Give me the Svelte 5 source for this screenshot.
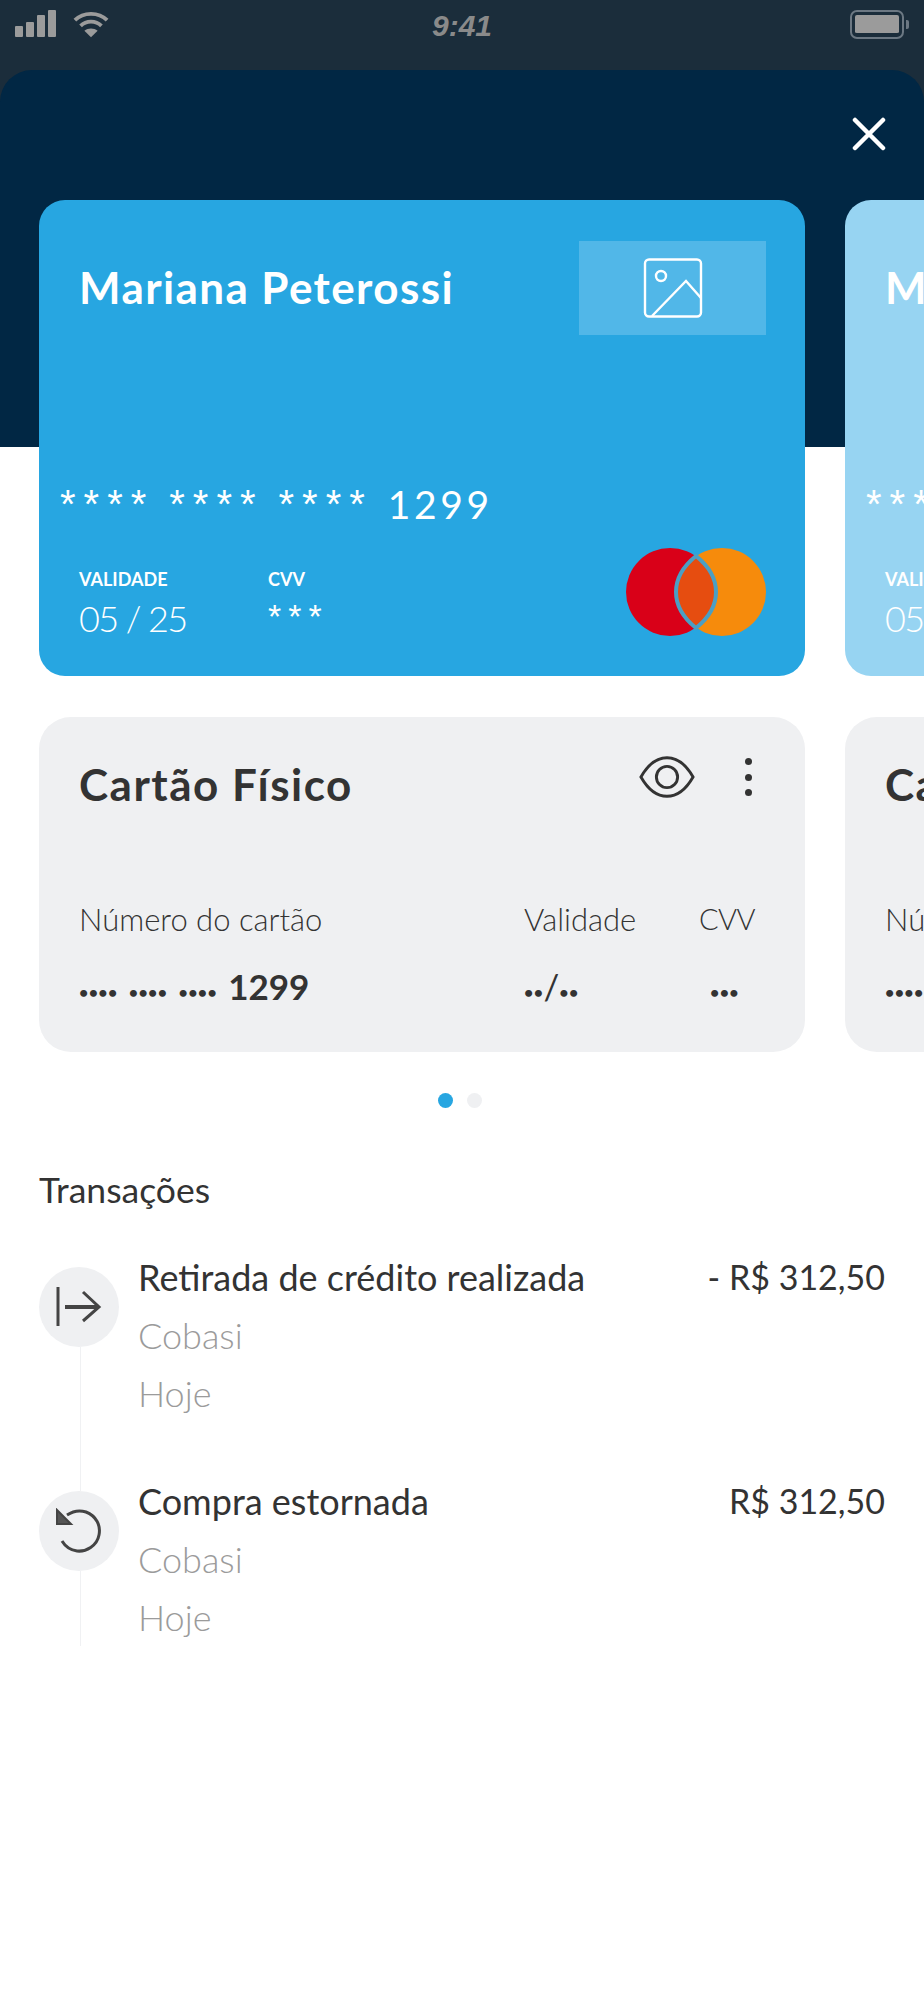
<script>
  const cards = [
    { soft: false, name: 'Mariana Peterossi' },
    { soft: true, name: 'Mariana Peterossi' }
  ];
  const tx = [
    { title: 'Retirada de crédito realizada', amount: '- R$ 312,50', icon: 'out' },
    { title: 'Compra estornada', amount: 'R$ 312,50', icon: 'undo' }
  ];
</script>

<div class="status">
  <div class="status-left">
    <div class="signal"><i class="b1"></i><i class="b2"></i><i class="b3"></i><i class="b4"></i></div>
    <svg class="wifi" width="36" height="28" viewBox="0 0 38 28" fill="none" stroke="#9b9b9b" stroke-width="4">
      <path d="M2 10 C11 1 27 1 36 10" />
      <path d="M8 16 C14 10 24 10 30 16" />
      <path d="M12 21 L19 28 L26 21 C22 18 16 18 12 21Z" fill="#9b9b9b" stroke="none" />
    </svg>
  </div>
  <span class="time">9:41</span>
  <div class="battery"><div class="cell"></div><div class="nub"></div></div>
</div>

<main class="sheet">
  <div class="close-row">
    <svg width="34" height="34" viewBox="0 0 34 34" stroke="#fff" stroke-width="4.5" stroke-linecap="round">
      <path d="M3 3 L31 31 M31 3 L3 31" />
    </svg>
  </div>

  <div class="carousel">
    {#each cards as c}
      <div class="slide">
        <section class="credit" class:soft={c.soft}>
          <div class="credit-top">
            <h2>{c.name}</h2>
            <div class="photo">
              <svg width="60" height="60" viewBox="0 0 60 60" fill="none" stroke="#fff" stroke-width="2.4">
                <rect x="2" y="1.5" width="56" height="57" rx="4" />
                <ellipse cx="18" cy="18" rx="5" ry="5" />
                <path d="M9 58 L43 23 L58 40" />
              </svg>
            </div>
          </div>
          <div class="pan"><span class="stars">****</span><span class="stars">****</span><span class="stars">****</span><span>1299</span></div>
          <div class="credit-bottom">
            <div class="field val">
              <b>VALIDADE</b>
              <span class="big">05 / 25</span>
            </div>
            <div class="field">
              <b>CVV</b>
              <span class="stars small">***</span>
            </div>
            <svg class="mc" width="142" height="90" viewBox="0 0 142 90">
              <circle cx="45" cy="45" r="44" fill="#d90018" />
              <circle cx="97" cy="45" r="44" fill="#f68b0c" />
              <path d="M71 9 C86 21 91 34 91 45 C91 56 86 69 71 81 C56 69 51 56 51 45 C51 34 56 21 71 9Z" fill="#e64d10" stroke="#4b9fc4" stroke-width="4" />
            </svg>
          </div>
        </section>

        <section class="info">
          <div class="info-top">
            <h3>Cartão Físico</h3>
            <div class="info-actions">
              <svg width="56" height="44" viewBox="0 0 58 44" fill="none" stroke="#333" stroke-width="3">
                <path d="M2 22 C10 8 19 2 29 2 C39 2 48 8 56 22 C48 36 39 42 29 42 C19 42 10 36 2 22Z" />
                <circle cx="29" cy="22" r="11" />
              </svg>
              <div class="kebab"><i></i><i></i><i></i></div>
            </div>
          </div>
          <div class="info-grid">
            <span class="lbl">Número do cartão</span>
            <span class="lbl">Validade</span>
            <span class="lbl cvv-lbl">CVV</span>
            <span class="v"><span class="masked">••••</span><span class="masked">••••</span><span class="masked">••••</span>1299</span>
            <span class="v"><span class="masked tight">••</span><span class="slash">/</span><span class="masked tight">••</span></span>
            <span class="v cvv"><span class="masked tight">•••</span></span>
          </div>
        </section>
      </div>
    {/each}
  </div>

  <div class="dots"><i class="on"></i><i></i></div>

  <section class="tx">
    <h4>Transações</h4>
    {#each tx as t}
      <div class="row">
        <div class="circle">
          {#if t.icon === 'out'}
            <svg width="46" height="42" viewBox="0 0 46 42" fill="none" stroke="#444" stroke-width="3">
              <path d="M2 1 V40" />
              <path d="M9 21 H43" stroke-width="4" />
              <path d="M27 6 L43 21 L27 35" />
            </svg>
          {:else}
            <svg width="46" height="46" viewBox="0 0 46 46" fill="none" stroke="#444" stroke-width="3">
              <path d="M11 7 C17 3 24 2 30 4 C40 8 45 17 43 27 C41 38 30 44 21 43 C14 42 9 38 6 33" />
              <path d="M1 2 L15 16 H1 Z" fill="#555" stroke-width="2" />
            </svg>
          {/if}
        </div>
        <div class="texts">
          <div class="head"><span class="title">{t.title}</span><span class="amount">{t.amount}</span></div>
          <div class="muted">Cobasi</div>
          <div class="muted">Hoje</div>
        </div>
      </div>
    {/each}
  </section>
</main>

<style>
  :global(body) {
    margin: 0;
    background: #1b2d3b;
    font-family: Lato, "Open Sans", sans-serif;
    width: 924px;
    height: 2000px;
    overflow: hidden;
  }
  h2, h3, h4 { margin: 0; }

  .status {
    height: 70px;
    padding: 10px 15px 0 15px;
    box-sizing: border-box;
    display: grid;
    grid-template-columns: 1fr auto 1fr;
    align-items: start;
    background: #1b2d3b;
  }
  .status-left { display: flex; gap: 17px; align-items: flex-start; }
  .signal { display: flex; gap: 3px; align-items: flex-end; height: 27px; }
  .signal i { display: block; width: 8px; background: #9b9b9b; border-radius: 1px; }
  .b1 { height: 11px; } .b2 { height: 15px; } .b3 { height: 22px; } .b4 { height: 27px; }
  .time {
    font: italic 700 30px/30px "Liberation Sans", sans-serif;
    color: #8a8a8a;
    margin-top: 1px;
  }
  .battery { justify-self: end; display: flex; align-items: center; gap: 2px; }
  .cell {
    width: 54px; height: 29px; box-sizing: border-box;
    border: 2px solid #6c7883; border-radius: 7px;
    background: #9b9b9b content-box;
    padding: 3px 3px 4px;
  }
  .nub { width: 3px; height: 9px; background: #6c7883; border-radius: 0 2px 2px 0; }

  .sheet { position: relative; height: 1930px; background: linear-gradient(#1b2d3b 32px, #fff 32px); }
  .sheet::before {
    content: "";
    position: absolute;
    inset: 0 0 auto 0;
    height: 377px;
    background: #012744;
    border-radius: 32px 32px 0 0;
  }

  .close-row {
    position: relative;
    display: flex;
    justify-content: flex-end;
    padding: 47px 38px 0 0;
    height: 83px;
  }

  .carousel { position: relative; display: flex; gap: 40px; padding-left: 39px; width: 1650px; }
  .slide { width: 766px; flex: none; display: flex; flex-direction: column; gap: 41px; }

  .credit {
    height: 476px;
    box-sizing: border-box;
    background: #27a6e1;
    border-radius: 26px;
    padding: 41px 39px 0 40px;
    color: #fff;
    display: flex;
    flex-direction: column;
  }
  .credit.soft { background: #97d4f2; }
  .credit-top { display: flex; justify-content: space-between; align-items: flex-start; }
  .credit-top h2 { font-size: 44px; letter-spacing: 1.4px; font-weight: 700; line-height: 94px; margin-top: -1px; }
  .photo {
    width: 187px; height: 94px;
    background: #51b7e8;
    display: flex; align-items: center; justify-content: center;
    box-sizing: border-box;
  }
  .credit.soft .photo { background: #b5e0f6; }
  .pan {
    margin: 147px 0 0 -19px;
    display: flex;
    gap: 15px;
    font-size: 39px;
    font-weight: 400;
    line-height: 44px;
    letter-spacing: 3.6px;
    height: 44px;
  }
  .stars { font-family: "Liberation Sans", sans-serif; font-size: 40px; letter-spacing: 8px; font-weight: 400; }
  .stars.small { font-size: 34px; letter-spacing: 7px; line-height: 40px; display: block; margin-top: 6px; }
  .credit-bottom { display: flex; align-items: flex-start; margin-top: 42px; }
  .field { display: flex; flex-direction: column; width: 189px; }
  .field b { font-size: 18px; line-height: 22px; font-weight: 700; }
  .field .big { font-size: 36px; letter-spacing: -1.6px; font-weight: 300; line-height: 46px; margin-top: 5px; }
  .mc { margin: -21px -1px 0 auto; }

  .info {
    height: 335px;
    box-sizing: border-box;
    background: #eff0f2;
    border-radius: 32px;
    padding: 39px 0 0 40px;
    color: #333;
  }
  .info-top { display: flex; justify-content: space-between; align-items: flex-start; height: 144px; }
  .info-top h3 { font-size: 44px; letter-spacing: 1.5px; font-weight: 700; line-height: 56px; }
  .info-actions { display: flex; align-items: center; margin-right: 53px; gap: 50px; margin-top: -1px; }
  .kebab { display: flex; flex-direction: column; gap: 8.5px; }
  .kebab i { display: block; width: 7px; height: 7px; border-radius: 50%; background: #333; }
  .info-grid {
    display: grid;
    grid-template-columns: 445px 175px 1fr;
    row-gap: 26px;
  }
  .lbl { font-size: 31px; font-weight: 300; line-height: 38px; }
  .cvv-lbl { font-size: 29px; letter-spacing: -0.5px; }
  .v { font-size: 35px; font-weight: 700; line-height: 44px; }
  .masked { font-size: 16px; letter-spacing: 0.4px; margin-right: 11px; vertical-align: 2px; }
  .masked.tight { margin-right: 0; }
  .slash { font-weight: 400; }
  .cvv { padding-left: 11px; }

  .dots { position: relative; display: flex; gap: 14px; padding: 41px 0 0 438px; }
  .dots i { display: block; width: 15px; height: 15px; border-radius: 50%; background: #eff0f2; }
  .dots i.on { background: #27a6e1; }

  .tx { padding: 60px 39px 0; color: #333; }
  .tx h4 { font-size: 35.5px; font-weight: 400; line-height: 44px; margin-bottom: 35px; }
  .row { position: relative; display: flex; gap: 19px; padding-bottom: 49px; }
  .row:last-child { padding-bottom: 0; }
  .row::before {
    content: "";
    position: absolute;
    left: 41px; top: 100px; bottom: -20px;
    width: 1px;
    background: #f0f1f3;
  }
  .row:last-child::before { bottom: 0; }
  .circle {
    position: relative;
    flex: none;
    width: 80px; height: 80px;
    margin-top: 20px;
    border-radius: 50%;
    background: #eff0f2;
    display: flex; align-items: center; justify-content: center;
  }
  .texts { flex: 1; margin-top: 1px; }
  .head { display: flex; justify-content: space-between; font-size: 36px; line-height: 58px; }
  .amount { font-size: 34px; }
  .muted { font-size: 36px; line-height: 58px; font-weight: 300; color: #9b9b9b; }
</style>
